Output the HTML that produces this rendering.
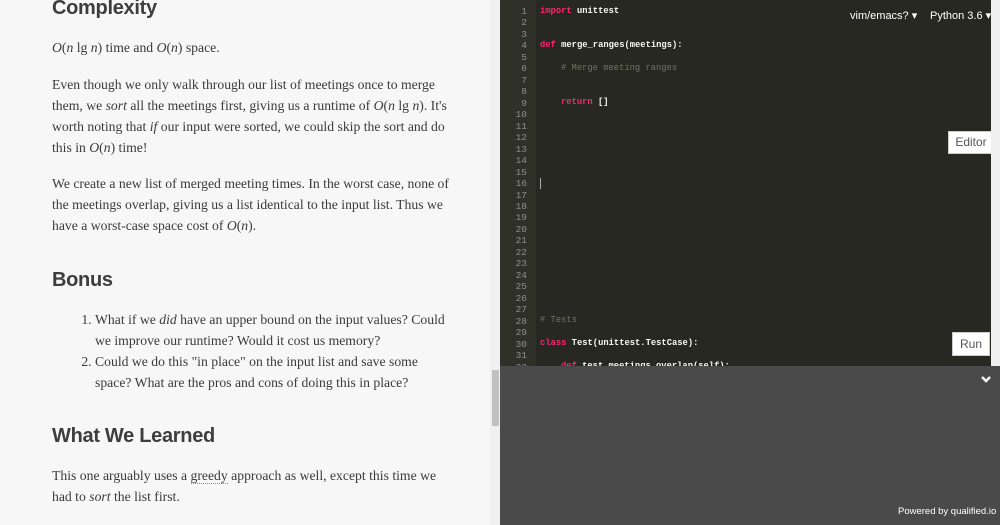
<!DOCTYPE html>
<html><head><style>
body{margin:0;width:1000px;height:525px;overflow:hidden;position:relative;font-family:"Liberation Serif",serif;}
#left{position:absolute;left:0;top:0;width:490px;height:525px;background:#f7f7f7;color:#3a3a3a;}
#sb{position:absolute;left:490px;top:0;width:10px;height:525px;background:#f0f0f0;}
#thumb{position:absolute;left:492px;top:370px;width:7px;height:56px;background:#c1c1c1;}
h2{font-family:"Liberation Sans",sans-serif;font-weight:bold;font-size:20px;color:#3d3d3d;margin:0;position:absolute;left:52px;letter-spacing:-0.3px}
p{position:absolute;left:52px;margin:0;font-size:13.7px;line-height:21px;width:400px;}
ol{position:absolute;left:52px;margin:0;padding-left:43px;font-size:13.7px;line-height:21px;width:355px}
#ed{position:absolute;left:500px;top:0;width:500px;height:366px;background:#272822;}
#gut{position:absolute;left:500px;top:0;width:36px;height:366px;background:#2f3129;}
.ln{position:absolute;left:500px;width:27px;text-align:right;font:9.5px "Liberation Mono",monospace;color:#8f908a}
.cd{position:absolute;left:540px;font:8.8px "Liberation Mono",monospace;color:#f8f8f2;white-space:pre;font-weight:bold}
.k{color:#f92672}.c{color:#75715e;font-weight:normal}
#bot{position:absolute;left:500px;top:366px;width:500px;height:159px;background:#4a4a4a;}
.btn{position:absolute;background:#fff;border:1px solid #ccc;font:12px "Liberation Sans",sans-serif;color:#555;text-align:center}
</style></head><body>
<div id="left">
<h2 style="top:-3px">Complexity</h2>
<p style="top:37px"><i>O</i>(<i>n</i> lg <i>n</i>) time and <i>O</i>(<i>n</i>) space.</p>
<p style="top:74px">Even though we only walk through our list of meetings once to merge them, we <i>sort</i> all the meetings first, giving us a runtime of <i>O</i>(<i>n</i> lg <i>n</i>). It's worth noting that <i>if</i> our input were sorted, we could skip the sort and do this in <i>O</i>(<i>n</i>) time!</p>
<p style="top:173px">We create a new list of merged meeting times. In the worst case, none of the meetings overlap, giving us a list identical to the input list. Thus we have a worst-case space cost of <i>O</i>(<i>n</i>).</p>
<h2 style="top:269px">Bonus</h2>
<ol style="top:309px"><li>What if we <i>did</i> have an upper bound on the input values? Could we improve our runtime? Would it cost us memory?</li><li>Could we do this "in place" on the input list and save some space? What are the pros and cons of doing this in place?</li></ol>
<h2 style="top:425px">What We Learned</h2>
<p style="top:465px">This one arguably uses a <span style="border-bottom:1px dotted #888">greedy</span> approach as well, except this time we had to <i>sort</i> the list first.</p>
</div>
<div id="sb"></div><div id="thumb"></div>
<div id="ed"></div><div id="gut"></div>
<div id="lines"></div>
<div class="cd" style="top:6px"><span class="k">import</span> unittest</div>
<div class="cd" style="top:40px"><span class="k">def</span> merge_ranges(meetings):</div>
<div class="cd" style="top:63px;left:561px"><span class="c"># Merge meeting ranges</span></div>
<div class="cd" style="top:97px;left:561px"><span class="k">return</span> []</div>
<div class="cd" style="top:315px"><span class="c"># Tests</span></div>
<div class="cd" style="top:338px"><span class="k">class</span> Test(unittest.TestCase):</div>
<div class="cd" style="top:361px;left:561px;height:5px;overflow:hidden"><span class="k">def</span> test_meetings_overlap(self):</div>
<div style="position:absolute;left:540px;top:178px;width:1px;height:11px;background:#aaa"></div>
<div style="position:absolute;left:850px;top:9px;font:11px 'Liberation Sans',sans-serif;color:#fff">vim/emacs? ▾</div>
<div style="position:absolute;left:930px;top:9px;font:11px 'Liberation Sans',sans-serif;color:#fff">Python 3.6 ▾</div>
<div class="btn" style="left:948px;top:131px;width:44px;height:21px;line-height:21px">Editor</div>
<div class="btn" style="left:952px;top:332px;width:36px;height:22px;line-height:22px">Run</div>
<div style="position:absolute;left:991px;top:0;width:9px;height:366px;background:#f0f0f0"></div>
<div id="bot"></div>
<svg style="position:absolute;left:980px;top:375px" width="12" height="10"><path d="M2 2 L6 6 L10 2" stroke="#fff" stroke-width="2.4" fill="none"/></svg>
<div style="position:absolute;left:898px;top:506px;color:#fff;font:9.5px 'Liberation Sans',sans-serif;white-space:nowrap">Powered by qualified.io</div>
<script>
var s='';for(var i=1;i<=32;i++){s+='<div class="ln" style="top:'+(6+(i-1)*11.47)+'px">'+i+'</div>';}
document.getElementById('lines').innerHTML=s;
</script>
</body></html>
